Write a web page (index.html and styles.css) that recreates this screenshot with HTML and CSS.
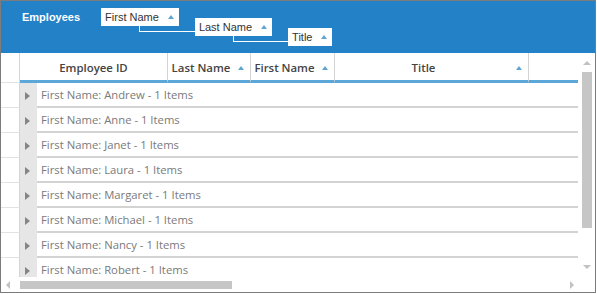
FILE: index.html
```html
<!DOCTYPE html>
<html lang="en">
<head>
  <meta charset="UTF-8" />
  <meta name="viewport" content="width=device-width, initial-scale=1.0"/>
  <title>Employees Grid</title>
  <link rel="stylesheet" href="styles.css">
</head>
<body>
  <div class="grid">
    <div class="group-panel">
      <span class="panel-title">Employees</span>
      <span class="chip chip-1">First Name<i class="sort-up"></i></span>
      <span class="chip chip-2">Last Name<i class="sort-up"></i></span>
      <span class="chip chip-3">Title<i class="sort-up"></i></span>
    </div>

    <div class="grid-body">
      <div class="table">
        <div class="head">
          <div class="ind"></div>
          <div class="hcell c-id"><span class="htext">Employee ID</span></div>
          <div class="hcell c-last"><span class="htext">Last Name</span><i class="sort-up"></i></div>
          <div class="hcell c-first"><span class="htext">First Name</span><i class="sort-up"></i></div>
          <div class="hcell c-title"><span class="htext">Title</span><i class="sort-up"></i></div>
          <div class="hcell c-fill"></div>
        </div>
        <div class="rows">
          <div class="row"><div class="ind"></div><div class="exp"><i class="tri"></i></div><div class="gtext">First Name: Andrew - 1 Items</div></div>
          <div class="row"><div class="ind"></div><div class="exp"><i class="tri"></i></div><div class="gtext">First Name: Anne - 1 Items</div></div>
          <div class="row"><div class="ind"></div><div class="exp"><i class="tri"></i></div><div class="gtext">First Name: Janet - 1 Items</div></div>
          <div class="row"><div class="ind"></div><div class="exp"><i class="tri"></i></div><div class="gtext">First Name: Laura - 1 Items</div></div>
          <div class="row"><div class="ind"></div><div class="exp"><i class="tri"></i></div><div class="gtext">First Name: Margaret - 1 Items</div></div>
          <div class="row"><div class="ind"></div><div class="exp"><i class="tri"></i></div><div class="gtext">First Name: Michael - 1 Items</div></div>
          <div class="row"><div class="ind"></div><div class="exp"><i class="tri"></i></div><div class="gtext">First Name: Nancy - 1 Items</div></div>
          <div class="row"><div class="ind"></div><div class="exp"><i class="tri"></i></div><div class="gtext">First Name: Robert - 1 Items</div></div>
        </div>
      </div>
      <div class="vscroll">
        <i class="arrow-up"></i>
        <div class="vthumb"></div>
        <i class="arrow-down"></i>
      </div>
    </div>

    <div class="hscroll">
      <i class="arrow-left"></i>
      <div class="hthumb"></div>
      <i class="arrow-right"></i>
    </div>
  </div>
</body>
</html>
```

FILE: styles.css
```css
body {
  margin: 0;
  background: #fff;
}
.grid {
  width: 596px;
  height: 293px;
  box-sizing: border-box;
  border: 1px solid #7c7c7c;
  display: flex;
  flex-direction: column;
  overflow: hidden;
  font-family: 'Open Sans', sans-serif;
}

/* group panel */
.group-panel {
  height: 52px;
  flex: none;
  background: #2381c8;
  display: flex;
  align-items: flex-start;
  padding: 7px 0 0 21px;
  box-sizing: border-box;
  font-family: 'Liberation Sans', Arial, sans-serif;
}
.panel-title {
  color: #fff;
  font-weight: bold;
  font-size: 11px;
  line-height: 18px;
  margin-right: 21px;
}
.chip {
  position: relative;
  height: 18px;
  background: #fff;
  color: #333;
  font-size: 11px;
  line-height: 18px;
  padding: 0 5px 0 4px;
  display: flex;
  align-items: center;
}
.chip .sort-up {
  margin-left: 9px;
}
.chip-2 { margin: 10px 0 0 16px; }
.chip-3 { margin: 20px 0 0 16px; }
.chip-1::after, .chip-2::after {
  content: "";
  position: absolute;
  left: 38px;
  top: 100%;
  height: 5px;
  width: calc(100% - 38px + 16px);
  border-left: 1px solid #fff;
  border-bottom: 1px solid #fff;
}

.sort-up {
  display: inline-block;
  width: 0;
  height: 0;
  border-left: 3.5px solid transparent;
  border-right: 3.5px solid transparent;
  border-bottom: 4px solid #5fa4d3;
}

/* body */
.grid-body {
  flex: 1;
  display: flex;
  min-height: 0;
}
.table {
  width: 577px;
  display: flex;
  flex-direction: column;
  min-height: 0;
}
.head {
  display: flex;
  height: 30px;
  flex: none;
}
.head .ind {
  width: 19px;
  border-right: 1px solid #d4d4d4;
  border-bottom: 1px solid #e2e2e2;
  box-sizing: border-box;
}
.hcell {
  box-sizing: border-box;
  border-right: 1px solid #d4d4d4;
  border-bottom: 3px solid #5ba7da;
  padding-top: 2px;
  display: flex;
  align-items: center;
  color: #444;
  font-size: 11.4px;
  font-weight: 600;
}
.htext {
  flex: 1;
  text-align: center;
}
.hcell .sort-up {
  margin: 0 6px 0 4px;
}
.c-id { width: 148px; }
.c-last { width: 83px; }
.c-first { width: 84px; }
.c-title { width: 194px; }
.c-fill { flex: 1; border-right: none; }

.rows {
  flex: 1;
  overflow: hidden;
}
.row {
  display: flex;
  height: 25px;
}
.row .ind {
  width: 19px;
  box-sizing: border-box;
  border-right: 1px solid #d4d4d4;
  border-bottom: 1px solid #e2e2e2;
}
.exp {
  width: 17px;
  background: #e6e6e6;
  display: flex;
  align-items: center;
  padding-left: 5px;
  box-sizing: border-box;
}
.tri {
  width: 0;
  height: 0;
  border-top: 4px solid transparent;
  border-bottom: 4px solid transparent;
  border-left: 5px solid #858585;
}
.gtext {
  flex: 1;
  box-sizing: border-box;
  border-bottom: 2px solid #d3d3d3;
  padding-left: 4px;
  color: #7a7a7a;
  font-size: 11.3px;
  line-height: 23px;
}

/* scrollbars */
.vscroll {
  width: 17px;
  flex: none;
  display: flex;
  flex-direction: column;
  align-items: center;
  padding: 8px 0 8px 1px;
  box-sizing: border-box;
}
.arrow-up {
  width: 0;
  height: 0;
  border-left: 4px solid transparent;
  border-right: 4px solid transparent;
  border-bottom: 4px solid #c2c2c2;
}
.vthumb {
  width: 10px;
  height: 156px;
  margin-top: 7px;
  background: #c6c6c6;
}
.arrow-down {
  margin-top: auto;
  width: 0;
  height: 0;
  border-left: 4px solid transparent;
  border-right: 4px solid transparent;
  border-top: 4px solid #c2c2c2;
}
.hscroll {
  height: 15px;
  flex: none;
  display: flex;
  align-items: center;
}
.arrow-left {
  margin-left: 5px;
  width: 0;
  height: 0;
  border-top: 4px solid transparent;
  border-bottom: 4px solid transparent;
  border-right: 4px solid #c2c2c2;
}
.hthumb {
  margin-left: 10px;
  width: 212px;
  height: 8px;
  background: #c6c6c6;
}
.arrow-right {
  margin-left: auto;
  margin-right: 21px;
  width: 0;
  height: 0;
  border-top: 4px solid transparent;
  border-bottom: 4px solid transparent;
  border-left: 4px solid #c2c2c2;
}
```
